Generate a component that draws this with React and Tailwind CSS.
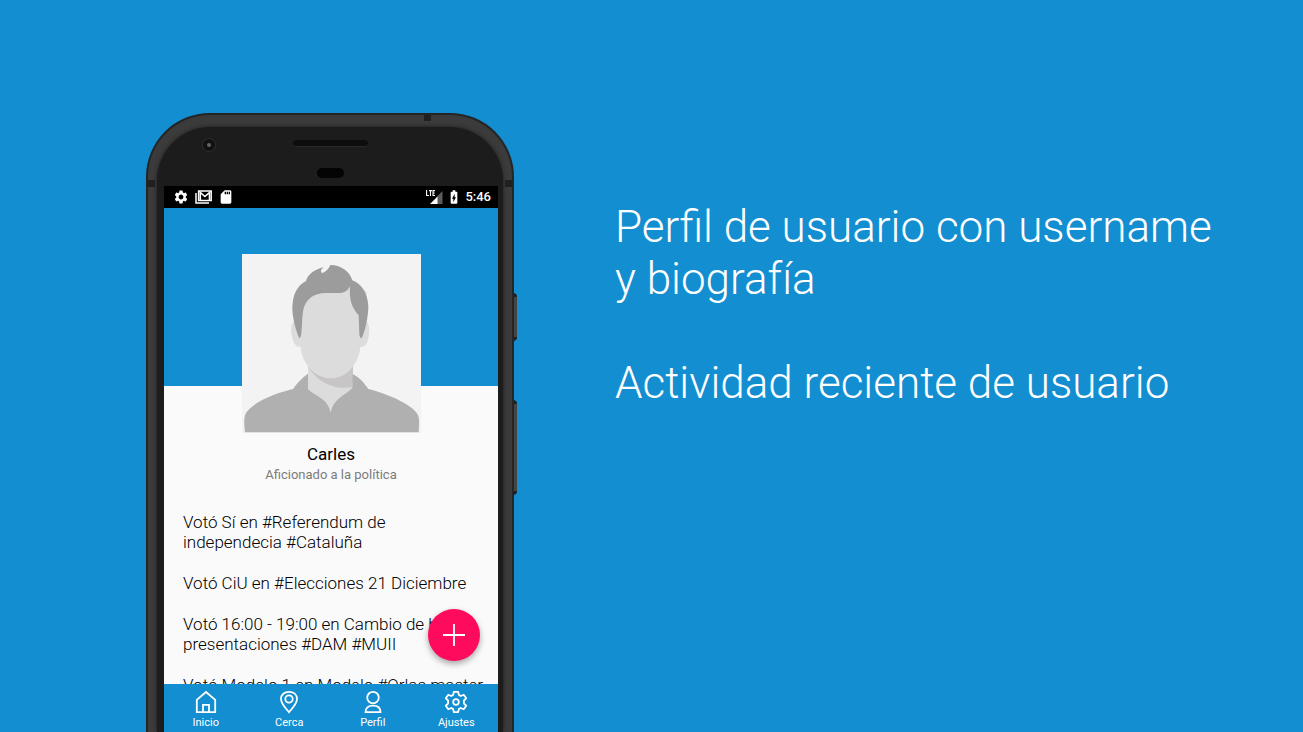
import { MdSettings, MdSdCard, MdBatteryChargingFull } from "react-icons/md";

const ACTIVITY = [
  "Votó Sí en #Referendum de independecia #Cataluña",
  "Votó CiU en #Elecciones 21 Diciembre",
  "Votó 16:00 - 19:00 en Cambio de hora presentaciones #DAM #MUII",
  "Votó Modelo 1 en Modelo #Orlas master",
];

function Avatar() {
  return (
    <svg viewBox="21 27 537 537" className="relative size-[179px] shrink-0 bg-[#f3f3f3]" role="img" aria-label="Foto de perfil">
      <path fill="#dcdcdc" d="M219 340H354V440L287 510L219 440Z" />
      <path fill="#c7c5c6" d="M219 366L354 366V426Q340 429 318 428C274 424 243 402 219 366Z" />
      <path fill="#dcdcdc" d="M178 230C166 234 167 262 172 279C176 296 184 308 197 305C201 360 244 400 287 400C330 400 371 362 376 305C389 308 397 296 400 279C405 260 404 237 394 230V140L340 100H240L178 150Z" />
      <path fill="#9c9c9c" d="M194 280C188 272 171 220 172 185C174 148 186 122 213 108C219 86 241 73 266 67L258 75Q257 82 261 84C270 82 281 73 286 60C317 60 344 78 352 106C378 116 398 142 400 184C400 218 390 260 380 279Q375 282 373 268L371 211C352 190 342 168 345 124C338 137 330 143 316 144H272C238 144 209 162 204 200C200 224 202 250 198 272Z" />
      <path fill="#b0b0b0" d="M219 386V432C239 454 278 458 287 504C295 458 335 451 353 427V387C374 398 388 414 400 432C450 444 535 478 550 512C554 527 552 545 551 562H30C28 545 26 526 30 510C45 474 122 444 174 432C186 415 201 397 219 386Z" />
    </svg>
  );
}

function MailStackIcon() {
  return (
    <svg viewBox="0 0 17 14" className="h-[14px] w-[17px]" fill="none" stroke="currentColor" aria-hidden="true">
      <path strokeWidth="1.5" d="M1 3V13H14" />
      <path strokeWidth="1.6" d="M5.300 10V2.500L9.900 6.500L14.500 2.500V10" />
      <path strokeWidth="1.5" d="M3.600 1H16.200V10.500H3.600Z" />
    </svg>
  );
}

function SignalIcon() {
  return (
    <svg viewBox="0 0 17 14" className="h-[14px] w-[17px]" fill="none" aria-hidden="true">
      <path fill="#5b5b5b" d="M16.500 1V14H11V6.500Z" />
      <path fill="#fff" d="M11.500 6.500V14H4Z" />
      <path stroke="#fff" strokeWidth="1.100" d="M0.600 0V5.500H3M3 .6H6M4.500 .6V6M9 .6H7V5.500H9M7 3H8.700" />
    </svg>
  );
}

function HomeIcon() {
  return (
    <svg viewBox="0 0 24 24" className="size-6" fill="none" stroke="currentColor" strokeWidth="1.800" aria-hidden="true">
      <path d="M2.800 22.200V9.800L12 2L21.200 9.800V22.200Z" />
      <path d="M9 22V14.800H15V22" />
    </svg>
  );
}

function PinIcon() {
  return (
    <svg viewBox="0 0 24 24" className="size-6" fill="none" stroke="currentColor" strokeWidth="1.800" aria-hidden="true">
      <path d="M12 22.200C9 18.500 4 14 4 9C4 4.500 7.500 1.800 12 1.800S20 4.500 20 9C20 14 15 18.500 12 22.200Z" />
      <circle cx="12" cy="9" r="3.700" />
    </svg>
  );
}

function PersonIcon() {
  return (
    <svg viewBox="0 0 24 24" className="size-6" fill="none" stroke="currentColor" strokeWidth="1.800" aria-hidden="true">
      <circle cx="12" cy="7.600" r="5.800" />
      <path d="M4.500 22.200C4.500 18 7 15.700 12 15.700S19.500 18 19.500 22.200Z" />
    </svg>
  );
}

function GearIcon() {
  return (
    <svg viewBox="0 0 24 24" className="size-6" fill="none" stroke="currentColor" strokeWidth="1.800" strokeLinejoin="round" aria-hidden="true">
      <path d="M9.800 1.800H14.200L14.800 4.900L16.800 6L19.700 4.700L22.200 8.300L19.900 10.500V13.500L22.200 15.700L19.700 19.300L16.800 18L14.800 19.100L14.200 22.200H9.800L9.200 19.100L7.200 18L4.300 19.300L1.800 15.700L4.100 13.500V10.500L1.800 8.300L4.300 4.700L7.200 6L9.200 4.900Z" />
      <circle cx="12" cy="12" r="2.800" />
    </svg>
  );
}

const TABS = [
  { label: "Inicio", Icon: HomeIcon },
  { label: "Cerca", Icon: PinIcon },
  { label: "Perfil", Icon: PersonIcon },
  { label: "Ajustes", Icon: GearIcon },
];

function PhoneTop() {
  return (
    <div className="flex h-[59px] shrink-0 items-start justify-between pr-[41px] pl-[39px] pt-3">
      <span className="flex size-3 items-center justify-center rounded-full bg-[#111] ring-1 ring-[#2c2c2c]">
        <span className="size-1 rounded-full bg-[#666660]" />
      </span>
      <span className="flex flex-col items-center gap-[21px] pt-px">
        <span className="h-[7px] w-[75px] rounded-full border-b border-[#292929] bg-[#0d0d0d]" />
        <span className="h-[10px] w-[27px] rounded-full bg-[#040404]" />
      </span>
      <span className="w-3" />
    </div>
  );
}

function Phone() {
  return (
    <div className="relative w-[368px] shrink-0">
      <span className="absolute top-[180px] -right-[3px] h-[48px] w-[4px] rounded-r-sm border-y-4 border-[#202020] bg-[#444]" />
      <span className="absolute top-[287px] -right-[3px] h-[95px] w-[4px] rounded-r-sm border-y-4 border-[#202020] bg-[#444]" />
      <div className="relative h-full overflow-hidden rounded-t-[64px] border-x-2 border-t-2 border-[#252525] bg-[#3b3b3b] px-[9px] pt-[12px]">
        <span className="absolute top-0 right-[81px] h-[6px] w-[7px] bg-[#202020]" />
        <span className="absolute top-[65px] left-0 h-[7px] w-[7px] bg-[#202020]" />
        <span className="absolute top-[65px] right-0 h-[7px] w-[7px] bg-[#202020]" />
        <div className="flex h-full flex-col rounded-t-[54px] bg-[#1c1c1c] pr-[5px] pl-[7px] shadow-[0_0_4px_#1c1c1c]">
          <PhoneTop />
          <Screen />
        </div>
      </div>
    </div>
  );
}

function Screen() {
  return (
    <div className="relative flex min-h-0 flex-1 flex-col overflow-hidden bg-[#fafafa]">
      <div className="flex h-[22px] shrink-0 items-center justify-between bg-black pr-[7px] pl-[9px] text-white">
        <div className="flex items-center gap-[6px]">
          <MdSettings className="size-4" />
          <MailStackIcon />
          <MdSdCard className="size-4" />
        </div>
        <div className="flex items-center gap-[3px] text-[13px] font-medium">
          <SignalIcon />
          <MdBatteryChargingFull className="size-4" />
          <span>5:46</span>
        </div>
      </div>
      <div className="h-[178px] shrink-0 bg-[#138ed0]" />
      <section className="-mt-[132px] flex min-h-0 flex-1 flex-col items-center">
        <Avatar />
        <h1 className="mt-[10px] text-[17px] leading-[22px] text-black">Carles</h1>
        <p className="text-[13px] leading-5 text-[#7c7c7c]">Aficionado a la política</p>
        <ul className="mt-[27px] flex min-h-0 w-full flex-1 flex-col gap-[21px] overflow-hidden pr-3 pl-[19px] text-[17px] leading-5 font-light text-black">
          {ACTIVITY.map((text) => (
            <li key={text} className="shrink-0">{text}</li>
          ))}
        </ul>
      </section>
      <nav className="grid h-12 shrink-0 grid-cols-4 bg-[#138ed0] text-white">
        {TABS.map(({ label, Icon }) => (
          <a key={label} href="#" className="flex flex-col items-center pt-[6px] text-[11px] leading-[17px]">
            <Icon />
            <span>{label}</span>
          </a>
        ))}
      </nav>
      <button type="button" aria-label="Añadir" className="absolute right-[18px] bottom-[71px] flex size-[52px] items-center justify-center rounded-full bg-[#ff0b5e] text-white shadow-[0_3px_6px_#0005]">
        <svg viewBox="0 0 24 24" className="size-6" stroke="currentColor" strokeWidth="1.800" aria-hidden="true">
          <path d="M1 12H23M12 1V23" />
        </svg>
      </button>
    </div>
  );
}

export default function App() {
  return (
    <main className="flex h-screen items-stretch gap-[101px] overflow-hidden bg-[#138ed0] pt-[113px] pl-[146px] font-[Roboto,sans-serif]">
      <Phone />
      <div className="flex max-w-[620px] min-w-0 flex-1 flex-col gap-[52px] pt-[88px] text-[44px] leading-[52px] font-light text-white">
        <p>Perfil de usuario con username y biografía</p>
        <p>Actividad reciente de usuario</p>
      </div>
    </main>
  );
}
